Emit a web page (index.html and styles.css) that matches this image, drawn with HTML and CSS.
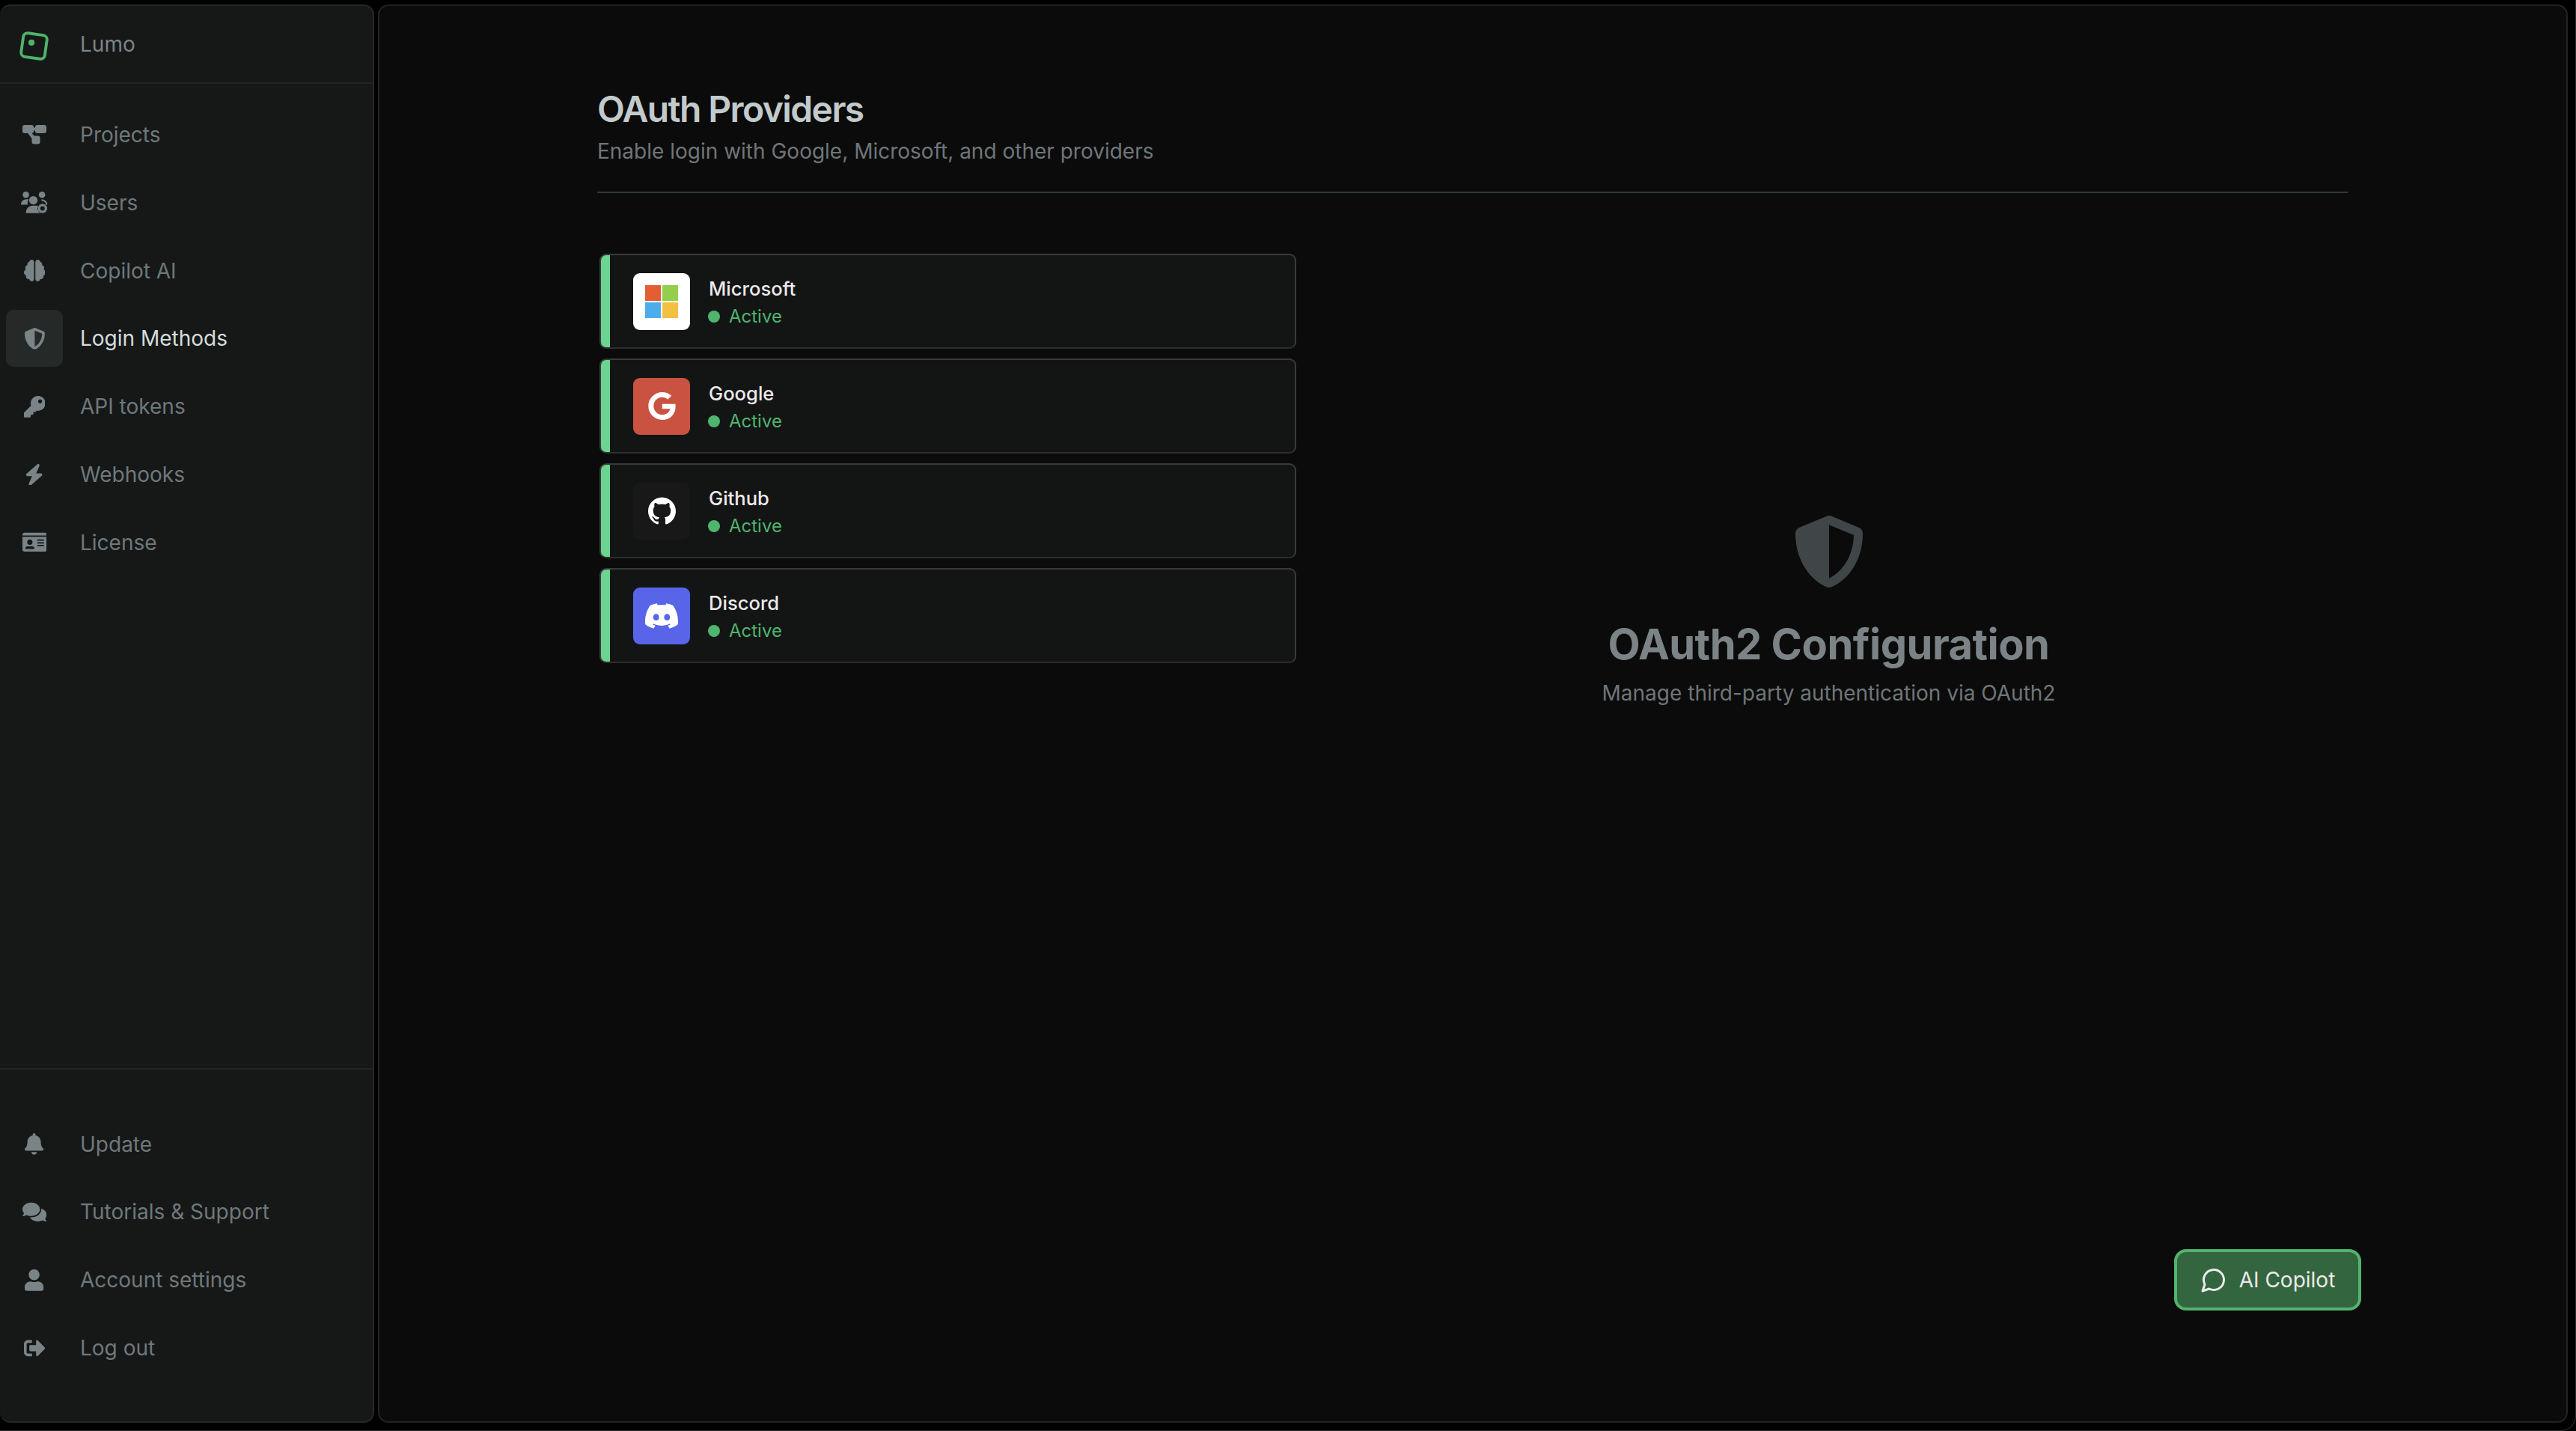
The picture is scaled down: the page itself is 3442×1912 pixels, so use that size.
FILE: index.html

```html
<!DOCTYPE html>
<html lang="en">
<head>
    <meta charset="UTF-8">
    <meta name="viewport" content="width=device-width, initial-scale=1.0">
    <title>Login Methods</title>
    <link rel="stylesheet" href="styles.css">
</head>
<body>
    <div class="app">
        <aside class="sidebar">
            <div class="brand">
                <span class="nav-icon">
                    <svg class="logo" viewBox="0 0 36 36"><rect x="4" y="4" width="28" height="28" rx="5" transform="rotate(8 18 18)" fill="none" stroke="currentColor" stroke-width="3.4"/><circle cx="15" cy="14" r="3.6" fill="currentColor"/></svg>
                </span>
                <span class="brand-name">Lumo</span>
            </div>

            <nav class="nav-group">
                <a class="nav-item">
                    <span class="nav-icon">
                        <svg class="icon-wide" viewBox="0 0 32 26" fill="currentColor"><rect x="0" y="0" width="15" height="11" rx="3"/><rect x="17" y="0" width="15" height="11" rx="3"/><rect x="13" y="3.5" width="6" height="4"/><rect x="12.5" y="14.5" width="11" height="11" rx="3"/><path d="M5 8l4-2 9 12-4 2z"/></svg>
                    </span>
                    Projects
                </a>
                <a class="nav-item">
                    <span class="nav-icon">
                        <svg viewBox="0 0 107 87" fill="currentColor">
                            <circle cx="20" cy="13" r="13"/>
                            <circle cx="85" cy="13" r="13"/>
                            <path d="M0 53c0-13 9-22 22-22h10c-4 5-6 10-5 22z"/>
                            <path d="M83 31c13 0 24 9 24 22h-6c-1-9-8-15-18-15z"/>
                            <circle cx="50" cy="35" r="17"/>
                            <path d="M20 87c0-18 12-30 28-30h14c10 0 16 3 20 8v22z"/>
                            <circle cx="87" cy="68" r="20" fill="#161818"/>
                            <circle cx="87" cy="68" r="13.5" fill="none" stroke="currentColor" stroke-width="9"/>
                            <circle cx="87" cy="68" r="17" fill="none" stroke="currentColor" stroke-width="4" stroke-dasharray="6.5 4.2"/>
                        </svg>
                    </span>
                    Users
                </a>
                <a class="nav-item">
                    <span class="nav-icon">
                        <svg viewBox="0 0 512 512" fill="currentColor"><path d="M184 0c30.9 0 56 25.1 56 56V456c0 30.9-25.1 56-56 56c-28.9 0-52.7-21.9-55.7-50.1c-5.2 1.4-10.7 2.1-16.3 2.1c-35.3 0-64-28.7-64-64c0-7.4 1.3-14.6 3.6-21.2C21.4 367.4 0 338.2 0 304c0-31.9 18.7-59.5 45.8-72.3C37.1 220.8 32 207 32 192c0-30.7 21.6-56.3 50.4-62.6C80.8 123.9 80 118 80 112c0-29.9 20.6-55.1 48.3-62.1C131.3 21.9 155.1 0 184 0zM328 0c28.9 0 52.6 21.9 55.7 49.9c27.8 7 48.3 32.1 48.3 62.1c0 6-.8 11.9-2.4 17.4c28.8 6.2 50.4 31.9 50.4 62.6c0 15-5.1 28.8-13.8 39.7C493.3 244.5 512 272.1 512 304c0 34.2-21.4 63.4-51.6 74.8c2.3 6.6 3.6 13.8 3.6 21.2c0 35.3-28.7 64-64 64c-5.6 0-11.1-.7-16.3-2.1c-3 28.2-26.8 50.1-55.7 50.1c-30.9 0-56-25.1-56-56V56c0-30.9 25.1-56 56-56z"/></svg>
                    </span>
                    Copilot AI
                </a>
                <a class="nav-item active">
                    <span class="nav-icon">
                        <svg viewBox="0 0 512 512" fill="currentColor"><path d="M466.5 83.7l-192-80a48.15 48.15 0 0 0-36.9 0l-192 80C27.7 91.1 16 108.6 16 128c0 198.5 114.5 335.7 221.5 380.3 11.8 4.9 25.1 4.9 36.9 0C360.1 472.6 496 349.3 496 128c0-19.4-11.7-36.9-29.5-44.3zM256.1 446.3l-.1-381 175.9 73.3c-3.3 151.4-82.1 261.1-175.8 307.7z"/></svg>
                    </span>
                    Login Methods
                </a>
                <a class="nav-item">
                    <span class="nav-icon">
                        <svg viewBox="0 0 512 512" fill="currentColor"><path d="M512 176.001C512 273.203 433.202 352 336 352c-11.22 0-22.19-1.062-32.827-3.069l-24.012 27.014A23.999 23.999 0 0 1 261.223 384H224v40c0 13.255-10.745 24-24 24h-40v40c0 13.255-10.745 24-24 24H24c-13.255 0-24-10.745-24-24v-78.059c0-6.365 2.529-12.47 7.029-16.971l161.802-161.802C163.108 213.814 160 195.271 160 176 160 78.798 238.797.001 335.999 0 433.488-.001 512 78.511 512 176.001zM336 128c0 26.51 21.49 48 48 48s48-21.49 48-48-21.49-48-48-48-48 21.49-48 48z"/></svg>
                    </span>
                    API tokens
                </a>
                <a class="nav-item">
                    <span class="nav-icon">
                        <svg viewBox="0 0 448 512" fill="currentColor"><path d="M349.4 44.6c5.9-13.7 1.5-29.7-10.6-38.5s-28.6-8-39.9 1.8l-256 224c-10 8.8-13.6 22.9-8.9 35.3S50.7 288 64 288H175.5L98.6 467.4c-5.9 13.7-1.5 29.7 10.6 38.5s28.6 8 39.9-1.8l256-224c10-8.8 13.6-22.9 8.9-35.3s-16.6-20.7-30-20.7H272.5L349.4 44.6z"/></svg>
                    </span>
                    Webhooks
                </a>
                <a class="nav-item">
                    <span class="nav-icon">
                        <svg viewBox="0 0 576 512" fill="currentColor"><path d="M528 32H48C21.5 32 0 53.5 0 80v16h576V80c0-26.5-21.5-48-48-48zM0 432c0 26.5 21.5 48 48 48h480c26.5 0 48-21.5 48-48V128H0v304zm352-232c0-4.4 3.6-8 8-8h144c4.4 0 8 3.6 8 8v16c0 4.4-3.6 8-8 8H360c-4.4 0-8-3.6-8-8v-16zm0 64c0-4.4 3.6-8 8-8h144c4.4 0 8 3.6 8 8v16c0 4.4-3.6 8-8 8H360c-4.4 0-8-3.6-8-8v-16zm0 64c0-4.4 3.6-8 8-8h144c4.4 0 8 3.6 8 8v16c0 4.4-3.6 8-8 8H360c-4.4 0-8-3.6-8-8v-16zM176 192c35.3 0 64 28.7 64 64s-28.7 64-64 64-64-28.7-64-64 28.7-64 64-64zM67.1 396.2C75.5 370.5 99.6 352 128 352h8.2c12.3 5.1 25.7 8 39.8 8s27.6-2.9 39.8-8h8.2c28.4 0 52.5 18.5 60.9 44.2 3.2 9.9-5.2 19.8-15.6 19.8H82.7c-10.4 0-18.8-10-15.6-19.8z"/></svg>
                    </span>
                    License
                </a>
            </nav>

            <nav class="nav-group nav-bottom">
                <a class="nav-item">
                    <span class="nav-icon">
                        <svg viewBox="0 0 448 512" fill="currentColor"><path d="M224 512c35.32 0 63.97-28.65 63.97-64H160.03c0 35.35 28.65 64 63.97 64zm215.39-149.71c-19.32-20.76-55.47-51.99-55.47-154.29 0-77.7-54.48-139.9-127.94-155.16V32c0-17.67-14.32-32-31.98-32s-31.98 14.33-31.98 32v20.84C118.56 68.1 64.08 130.3 64.08 208c0 102.3-36.15 133.53-55.47 154.29-6 6.45-8.66 14.16-8.61 21.71.11 16.4 12.98 32 32.1 32h383.8c19.12 0 32-15.6 32.1-32 .05-7.55-2.61-15.27-8.61-21.71z"/></svg>
                    </span>
                    Update
                </a>
                <a class="nav-item">
                    <span class="nav-icon">
                        <svg viewBox="0 0 576 512" fill="currentColor"><path d="M416 192c0-88.4-93.1-160-208-160S0 103.6 0 192c0 34.3 14.1 65.9 38 92-13.4 30.2-35.5 54.2-35.8 54.5-2.2 2.3-2.8 5.7-1.5 8.7S4.8 352 8 352c36.6 0 66.9-12.3 88.7-25 32.2 15.7 70.3 25 111.3 25 114.9 0 208-71.6 208-160zm122 220c23.9-26 38-57.7 38-92 0-66.9-53.5-124.2-129.3-148.1.9 6.6 1.3 13.3 1.3 20.1 0 105.9-107.7 192-240 192-10.8 0-21.3-.8-31.7-1.9C207.8 439.6 281.8 480 368 480c41 0 79.1-9.2 111.3-25 21.8 12.7 52.1 25 88.7 25 3.2 0 6.1-1.9 7.3-4.8 1.3-2.9.7-6.3-1.5-8.7-.3-.3-22.4-24.2-35.8-54.5z"/></svg>
                    </span>
                    Tutorials &amp; Support
                </a>
                <a class="nav-item">
                    <span class="nav-icon">
                        <svg viewBox="0 0 448 512" fill="currentColor"><path d="M224 256c70.7 0 128-57.3 128-128S294.7 0 224 0 96 57.3 96 128s57.3 128 128 128zm89.6 32h-16.7c-22.2 10.2-46.9 16-72.9 16s-50.6-5.8-72.9-16h-16.7C60.2 288 0 348.2 0 422.4V464c0 26.5 21.5 48 48 48h352c26.5 0 48-21.5 48-48v-41.6c0-74.2-60.2-134.4-134.4-134.4z"/></svg>
                    </span>
                    Account settings
                </a>
                <a class="nav-item">
                    <span class="nav-icon">
                        <svg viewBox="0 0 512 512" fill="currentColor"><path d="M497 273L329 441c-15 15-41 4.5-41-17v-96H152c-13.3 0-24-10.7-24-24v-96c0-13.3 10.7-24 24-24h136V88c0-21.4 25.9-32 41-17l168 168c9.3 9.4 9.3 24.6 0 34zM192 436v-40c0-6.6-5.4-12-12-12H96c-17.7 0-32-14.3-32-32V160c0-17.7 14.3-32 32-32h84c6.6 0 12-5.4 12-12V76c0-6.6-5.4-12-12-12H96c-53 0-96 43-96 96v192c0 53 43 96 96 96h84c6.6 0 12-5.4 12-12z"/></svg>
                    </span>
                    Log out
                </a>
            </nav>
        </aside>

        <main class="main">
            <div class="page-header">
                <h1>OAuth Providers</h1>
                <p>Enable login with Google, Microsoft, and other providers</p>
            </div>

            <div class="content">
                <div class="provider-list">
                    <div class="provider-card">
                        <div class="provider-logo logo-microsoft">
                            <div class="ms-grid">
                                <span class="ms-red"></span>
                                <span class="ms-green"></span>
                                <span class="ms-blue"></span>
                                <span class="ms-yellow"></span>
                            </div>
                        </div>
                        <div class="provider-info">
                            <div class="provider-name">Microsoft</div>
                            <div class="provider-status"><span class="status-dot"></span>Active</div>
                        </div>
                    </div>
                    <div class="provider-card">
                        <div class="provider-logo logo-google">
                            <svg class="logo-g" viewBox="0 8 488 496" fill="currentColor"><path d="M488 261.8C488 403.3 391.1 504 248 504 110.8 504 0 393.2 0 256S110.8 8 248 8c66.8 0 123 24.5 166.3 64.9l-67.5 64.9C258.5 52.6 94.3 116.6 94.3 256c0 86.5 69.1 156.6 153.7 156.6 98.2 0 135-70.4 140.8-106.9H248v-85.3h236.1c2.3 12.7 3.9 24.9 3.9 41.4z"/></svg>
                        </div>
                        <div class="provider-info">
                            <div class="provider-name">Google</div>
                            <div class="provider-status"><span class="status-dot"></span>Active</div>
                        </div>
                    </div>
                    <div class="provider-card">
                        <div class="provider-logo logo-github">
                            <svg class="logo-g" viewBox="0 0 24 24" fill="currentColor"><path d="M12 .297c-6.63 0-12 5.373-12 12 0 5.303 3.438 9.8 8.205 11.385.6.113.82-.258.82-.577 0-.285-.01-1.04-.015-2.04-3.338.724-4.042-1.61-4.042-1.61C4.422 18.07 3.633 17.7 3.633 17.7c-1.087-.744.084-.729.084-.729 1.205.084 1.838 1.236 1.838 1.236 1.07 1.835 2.809 1.305 3.495.998.108-.776.417-1.305.76-1.605-2.665-.3-5.466-1.332-5.466-5.93 0-1.31.465-2.38 1.235-3.22-.135-.303-.54-1.523.105-3.176 0 0 1.005-.322 3.3 1.23.96-.267 1.98-.399 3-.405 1.02.006 2.04.138 3 .405 2.28-1.552 3.285-1.23 3.285-1.23.645 1.653.24 2.873.12 3.176.765.84 1.23 1.91 1.23 3.22 0 4.61-2.805 5.625-5.475 5.92.42.36.81 1.096.81 2.22 0 1.606-.015 2.896-.015 3.286 0 .315.21.69.825.57C20.565 22.092 24 17.592 24 12.297c0-6.627-5.373-12-12-12"/></svg>
                        </div>
                        <div class="provider-info">
                            <div class="provider-name">Github</div>
                            <div class="provider-status"><span class="status-dot"></span>Active</div>
                        </div>
                    </div>
                    <div class="provider-card">
                        <div class="provider-logo logo-discord">
                            <svg class="logo-d" viewBox="0 0 24 24" fill="currentColor"><path d="M20.317 4.3698a19.7913 19.7913 0 00-4.8851-1.5152.0741.0741 0 00-.0785.0371c-.211.3753-.4447.8648-.6083 1.2495-1.8447-.2762-3.68-.2762-5.4868 0-.1636-.3933-.4058-.8742-.6177-1.2495a.077.077 0 00-.0785-.037 19.7363 19.7363 0 00-4.8852 1.515.0699.0699 0 00-.0321.0277C.5334 9.0458-.319 13.5799.0992 18.0578a.0824.0824 0 00.0312.0561c2.0528 1.5076 4.0413 2.4228 5.9929 3.0294a.0777.0777 0 00.0842-.0276c.4616-.6304.8731-1.2952 1.226-1.9942a.076.076 0 00-.0416-.1057c-.6528-.2476-1.2743-.5495-1.8722-.8923a.077.077 0 01-.0076-.1277c.1258-.0943.2517-.1923.3718-.2914a.0743.0743 0 01.0776-.0105c3.9278 1.7933 8.18 1.7933 12.0614 0a.0739.0739 0 01.0785.0095c.1202.099.246.1981.3728.2924a.077.077 0 01-.0066.1276 12.2986 12.2986 0 01-1.873.8914.0766.0766 0 00-.0407.1067c.3604.698.7719 1.3628 1.225 1.9932a.076.076 0 00.0842.0286c1.961-.6067 3.9495-1.5219 6.0023-3.0294a.077.077 0 00.0313-.0552c.5004-5.177-.8382-9.6739-3.5485-13.6604a.061.061 0 00-.0312-.0286zM8.02 15.3312c-1.1825 0-2.1569-1.0857-2.1569-2.419 0-1.3332.9555-2.4189 2.157-2.4189 1.2108 0 2.1757 1.0952 2.1568 2.419 0 1.3332-.9555 2.4189-2.1569 2.4189zm7.9748 0c-1.1825 0-2.1569-1.0857-2.1569-2.419 0-1.3332.9554-2.4189 2.1569-2.4189 1.2108 0 2.1757 1.0952 2.1568 2.419 0 1.3332-.946 2.4189-2.1568 2.4189Z"/></svg>
                        </div>
                        <div class="provider-info">
                            <div class="provider-name">Discord</div>
                            <div class="provider-status"><span class="status-dot"></span>Active</div>
                        </div>
                    </div>
                </div>

                <div class="config-panel">
                    <svg class="config-shield" viewBox="16 0 480 512" fill="currentColor"><path d="M466.5 83.7l-192-80a48.15 48.15 0 0 0-36.9 0l-192 80C27.7 91.1 16 108.6 16 128c0 198.5 114.5 335.7 221.5 380.3 11.8 4.9 25.1 4.9 36.9 0C360.1 472.6 496 349.3 496 128c0-19.4-11.7-36.9-29.5-44.3zM256.1 446.3l-.1-381 175.9 73.3c-3.3 151.4-82.1 261.1-175.8 307.7z"/></svg>
                    <h2>OAuth2 Configuration</h2>
                    <p>Manage third-party authentication via OAuth2</p>
                </div>
            </div>

            <button class="copilot-btn">
                <svg viewBox="0 0 24 24" fill="none" stroke="currentColor" stroke-width="2" stroke-linecap="round" stroke-linejoin="round"><path d="M7.9 20A9 9 0 1 0 4 16.1L2 22Z"/></svg>
                AI Copilot
            </button>
        </main>
    </div>
</body>
</html>
```

FILE: styles.css

```css
* { margin: 0; padding: 0; box-sizing: border-box; }
html, body { height: 100%; }
body {
    font-family: Inter, "Noto Sans", sans-serif;
    background: #000;
    color: #fff;
    overflow: hidden;
}
.app {
    display: flex;
    gap: 5px;
    height: 1912px;
    padding: 6px 10px 10px 0;
    border-right: 1px solid #2c2c2c;
    border-bottom: 1px solid #2c2c2c;
    border-bottom-right-radius: 20px;
}

/* sidebar */
.sidebar {
    width: 500px;
    flex-shrink: 0;
    display: flex;
    flex-direction: column;
    background: #161818;
    border: 2px solid #262828;
    border-left: none;
    border-radius: 14px;
}
.brand {
    display: flex;
    align-items: center;
    gap: 23px;
    height: 104px;
    flex-shrink: 0;
    padding-left: 8px;
    border-bottom: 2px solid #232525;
    color: #7c8487;
    font-size: 28px;
}
.nav-group {
    display: flex;
    flex-direction: column;
    gap: 14.8px;
    padding: 30px 0 0 8px;
}
.nav-bottom {
    margin-top: auto;
    padding-top: 62px;
    padding-bottom: 60px;
    border-top: 2px solid #232525;
}
.nav-item {
    display: flex;
    align-items: center;
    gap: 23px;
    height: 76px;
    font-size: 28px;
    color: #6f787b;
}
.nav-item.active { color: #d5dcdd; }
.nav-item.active .nav-icon {
    background: #252a28;
}
.nav-icon {
    width: 76px;
    height: 76px;
    flex-shrink: 0;
    display: flex;
    align-items: center;
    justify-content: center;
    border-radius: 10px;
    color: #7a8487;
}
.nav-icon svg { height: 28.8px; width: auto; }
.nav-icon svg.icon-wide { height: 26px; }
.nav-icon svg.logo {
    height: 41px;
    margin-top: 4px;
    margin-left: -2px;
    color: #4fb36a;
}

/* main panel */
.main {
    position: relative;
    flex: 1;
    background: #0b0b0b;
    border: 2px solid #222;
    border-radius: 14px;
    padding: 0 292px 0 291px;
}
.page-header {
    height: 250px;
    padding-top: 110px;
    border-bottom: 2px solid #2f3d35;
}
.page-header h1 {
    font-size: 48px;
    line-height: 56px;
    font-weight: 600;
    letter-spacing: -1.6px;
    color: #c2cacb;
}
.page-header p {
    font-size: 28px;
    line-height: 36px;
    margin-top: 10px;
    color: #6f7679;
}
.content {
    display: flex;
    gap: 18px;
    padding: 81px 0 0 3px;
}
.provider-list {
    width: 931px;
    flex-shrink: 0;
    display: flex;
    flex-direction: column;
    gap: 13px;
}
.provider-card {
    display: flex;
    align-items: center;
    gap: 25px;
    height: 127px;
    padding-left: 43px;
    background: linear-gradient(90deg, #6ad490 12px, #131515 12px);
    border: 2px solid #3a3a3a;
    border-bottom-color: #2c2e2e;
    border-radius: 9px;
}
.provider-logo {
    width: 76px;
    height: 76px;
    flex-shrink: 0;
    display: flex;
    align-items: center;
    justify-content: center;
    border-radius: 9px;
}
.logo-microsoft { background: #fff; }
.logo-google { background: #c95340; color: #fff; }
.logo-github { background: #181818; color: #fff; }
.logo-discord { background: #5865e8; color: #fff; }
.logo-g { width: 37px; height: 37px; }
.logo-d { width: 44px; height: 44px; }
.ms-grid {
    display: grid;
    grid-template-columns: 21px 21px;
    grid-auto-rows: 21px;
    gap: 2px;
}
.ms-red { background: #e35f33; }
.ms-green { background: #93ce4d; }
.ms-blue { background: #4cadeb; }
.ms-yellow { background: #f3c044; }
.provider-info { padding-top: 2px; }
.provider-name {
    font-size: 25.6px;
    line-height: 32px;
    font-weight: 500;
    color: #eee9ec;
}
.provider-status {
    display: flex;
    align-items: center;
    gap: 12px;
    margin-top: 6px;
    font-size: 24px;
    line-height: 30px;
    color: #4fb46e;
}
.status-dot {
    width: 16px;
    height: 16px;
    margin-left: -1px;
    border-radius: 50%;
    background: #4fb46e;
}
.config-panel {
    flex: 1;
    display: flex;
    flex-direction: column;
    align-items: center;
    padding-top: 350px;
}
.config-shield {
    width: 90px;
    height: 96px;
    color: #404647;
}
.config-panel h2 {
    font-size: 56px;
    line-height: 70px;
    font-weight: 700;
    letter-spacing: -0.5px;
    margin-top: 41px;
    color: #7b8386;
}
.config-panel p {
    font-size: 28px;
    line-height: 36px;
    margin-top: 12px;
    color: #6f7679;
}
.copilot-btn {
    position: absolute;
    right: 274px;
    bottom: 148px;
    width: 250px;
    height: 82px;
    display: flex;
    align-items: center;
    justify-content: center;
    gap: 16px;
    background: #33663f;
    border: 4px solid #52b36f;
    border-radius: 16px;
    color: #eee9ec;
    font-family: inherit;
    font-size: 28px;
    font-weight: 400;
}
.copilot-btn svg { width: 36px; height: 36px; }
```
